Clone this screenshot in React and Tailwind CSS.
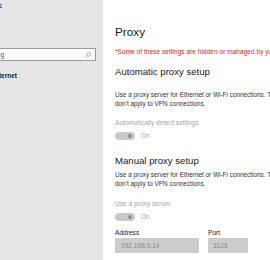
const Toggle = () => (
  <div className="mt-[5px] flex h-[8px] items-center gap-[6px]">
    <div className="flex h-[8px] w-[20px] items-center justify-end rounded-full bg-[#c9c9c9] pr-[3px]">
      <div className="h-[4px] w-[4px] rounded-full bg-[#8a8a8a]"></div>
    </div>
    <span className="text-[6.5px] leading-[8px] text-[#a3a3a3]">On</span>
  </div>
);

const Sidebar = () => (
  <div className="flex h-full w-[103px] shrink-0 flex-col overflow-hidden bg-[#e6e6e6] text-[6.5px] text-[#1a1a1a]">
    {/* title, clipped on the left */}
    <div className="-ml-[60px] mt-[2px] w-[62px] text-right leading-[8px] whitespace-nowrap">Settings</div>

    {/* search box */}
    <div className="-ml-[60px] mt-[38px] flex h-[13px] w-[156px] items-center border border-[#9c9c9c] bg-[#fbfbfb]">
      <span className="w-[63px] text-right leading-[8px] whitespace-nowrap text-[#555]">Find a setting</span>
      <div className="flex-1"></div>
      <svg width="6" height="6" viewBox="0 0 12 12" className="mr-[4px]" fill="none" stroke="#8a8a8a" strokeWidth="1.3">
        <circle cx="7.3" cy="4.7" r="3.7" />
        <path d="M4.6 7.4 L1 11" />
      </svg>
    </div>

    <div className="-ml-[60px] mt-[11px] w-[77px] text-right font-bold leading-[8px] whitespace-nowrap">Network &amp; Internet</div>
  </div>
);

export default function App() {
  return (
    <div className="flex h-[260px] w-[270px] overflow-hidden bg-white font-['Liberation_Sans',Arial,sans-serif]">
      <Sidebar />
      <div className="flex min-w-0 flex-1 flex-col overflow-hidden pl-[12px] pt-[25px] whitespace-nowrap">
        <h1 className="text-[11.8px] leading-[14px] text-[#1a1a1a]">Proxy</h1>
        <p className="mt-[9px] text-[6.6px] leading-[8px] text-[#e3242b]">
          *Some of these settings are hidden or managed by your organization.
        </p>

        <h2 className="mt-[10px] text-[9.6px] leading-[12px] text-[#1a1a1a]">Automatic proxy setup</h2>
        <p className="mt-[12px] text-[6.4px] leading-[9px] text-[#333]">
          Use a proxy server for Ethernet or Wi-Fi connections. These settings
          <br />
          don't apply to VPN connections.
        </p>
        <p className="mt-[11px] text-[6.6px] leading-[8px] text-[#a6a6a6]">Automatically detect settings</p>
        <Toggle />

        <h2 className="mt-[15px] text-[9.6px] leading-[12px] text-[#1a1a1a]">Manual proxy setup</h2>
        <p className="mt-[3px] text-[6.4px] leading-[9px] text-[#333]">
          Use a proxy server for Ethernet or Wi-Fi connections. These settings
          <br />
          don't apply to VPN connections.
        </p>
        <p className="mt-[12px] text-[6.6px] leading-[8px] text-[#a6a6a6]">Use a proxy server</p>
        <Toggle />

        <div className="mt-[8px] flex gap-[9px] text-[6.6px] leading-[8px] text-[#1a1a1a]">
          <div className="w-[84px]">
            <div>Address</div>
            <div className="mt-[1px] flex h-[15px] items-center bg-[#cccccc] pl-[6px] text-[#8a8a8a]">192.168.0.14</div>
          </div>
          <div className="w-[40px]">
            <div>Port</div>
            <div className="mt-[1px] flex h-[15px] items-center bg-[#cccccc] pl-[5px] text-[#8a8a8a]">3128</div>
          </div>
        </div>
      </div>
    </div>
  );
}
